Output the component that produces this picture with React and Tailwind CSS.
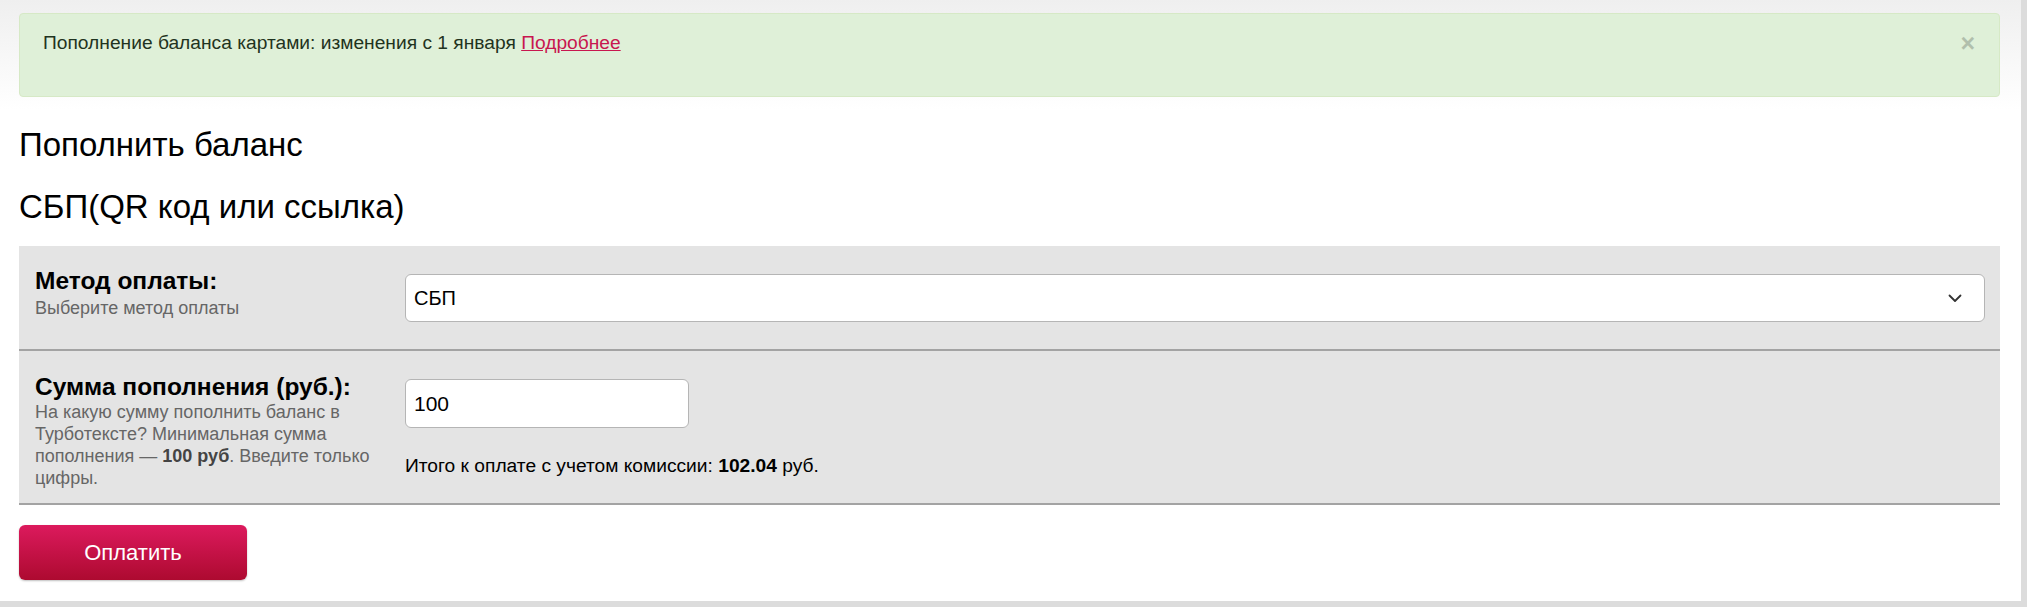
export default function App() {
  return (
    <div className="flex h-[607px] w-[2027px] overflow-hidden bg-white font-['Liberation_Sans',Arial,sans-serif] text-black">
      <div className="flex flex-1 flex-col">
        <div className="flex-1 bg-[linear-gradient(to_bottom,#efefef,#ffffff_110px)] pl-[19px] pr-[21px] pt-[13px]">
          <div className="relative h-[84px] rounded-[4px] border border-[#d6e9c6] bg-[#dff0d8] pl-[23px] pt-[17px] text-[19.2px] leading-[24px] text-[#1f3320]">
            Пополнение баланса картами: изменения с 1 января{' '}
            <a href="#" className="text-[#c8174f] underline">
              Подробнее
            </a>
            <button className="absolute right-[24px] top-[17px] text-[25px] font-bold leading-none text-black opacity-20">
              ×
            </button>
          </div>

          <h1 className="mt-[30px] text-[33px] leading-[36px]">Пополнить баланс</h1>
          <h2 className="mt-[26px] text-[33px] leading-[36px]">СБП(QR код или ссылка)</h2>

          <div className="mt-[21px] bg-[#e4e4e4]">
            <div className="flex items-start border-b-2 border-[#a3a3a3] pl-[16px] pr-[15px] pt-[21px] pb-[27px]">
              <div className="w-[350px] shrink-0">
                <div className="text-[24.5px] font-bold leading-[28px]">Метод оплаты:</div>
                <div className="mt-[2px] text-[18px] leading-[22px] text-[#666]">Выберите метод оплаты</div>
              </div>
              <div className="ml-[20px] mt-[7px] flex h-[48px] flex-1 items-center justify-between rounded-[6px] border border-[#b5b5b5] bg-white pl-[8px] pr-[22px] text-[20px]">
                <span>СБП</span>
                <svg width="14" height="9" viewBox="0 0 14 9" fill="none">
                  <path d="M1.5 1.5 7 7l5.5-5.5" stroke="#333" strokeWidth="1.8" strokeLinecap="round" strokeLinejoin="round" />
                </svg>
              </div>
            </div>

            <div className="flex items-start border-b-2 border-[#a3a3a3] pl-[16px] pr-[15px] pt-[22px] pb-[14px]">
              <div className="w-[350px] shrink-0">
                <div className="text-[24.5px] font-bold leading-[28px]">Сумма пополнения (руб.):</div>
                <p className="text-[18px] leading-[22px] text-[#666]">
                  На какую сумму пополнить баланс в Турботексте? Минимальная сумма пополнения — <b className="text-[#444]">100&nbsp;руб</b>. Введите только цифры.
                </p>
              </div>
              <div className="ml-[20px] mt-[6px]">
                <div className="flex h-[49px] w-[284px] items-center rounded-[6px] border border-[#b5b5b5] bg-white pl-[8px] text-[21px]">
                  100
                </div>
                <div className="mt-[26px] text-[19.2px] leading-[23px]">
                  Итого к оплате с учетом комиссии: <b>102.04</b> руб.
                </div>
              </div>
            </div>
          </div>

          <button className="mt-[20px] flex h-[55px] w-[228px] items-center justify-center rounded-[6px] bg-[linear-gradient(to_bottom,#dc1a5d,#ad0a30)] text-[22px] text-white shadow-[0_1px_2px_rgba(0,0,0,0.25)]">
            Оплатить
          </button>
        </div>
        <div className="h-[6px] bg-[#dcdcdc]" />
      </div>
      <div className="w-[6px] bg-[#dcdcdc]" />
    </div>
  );
}
